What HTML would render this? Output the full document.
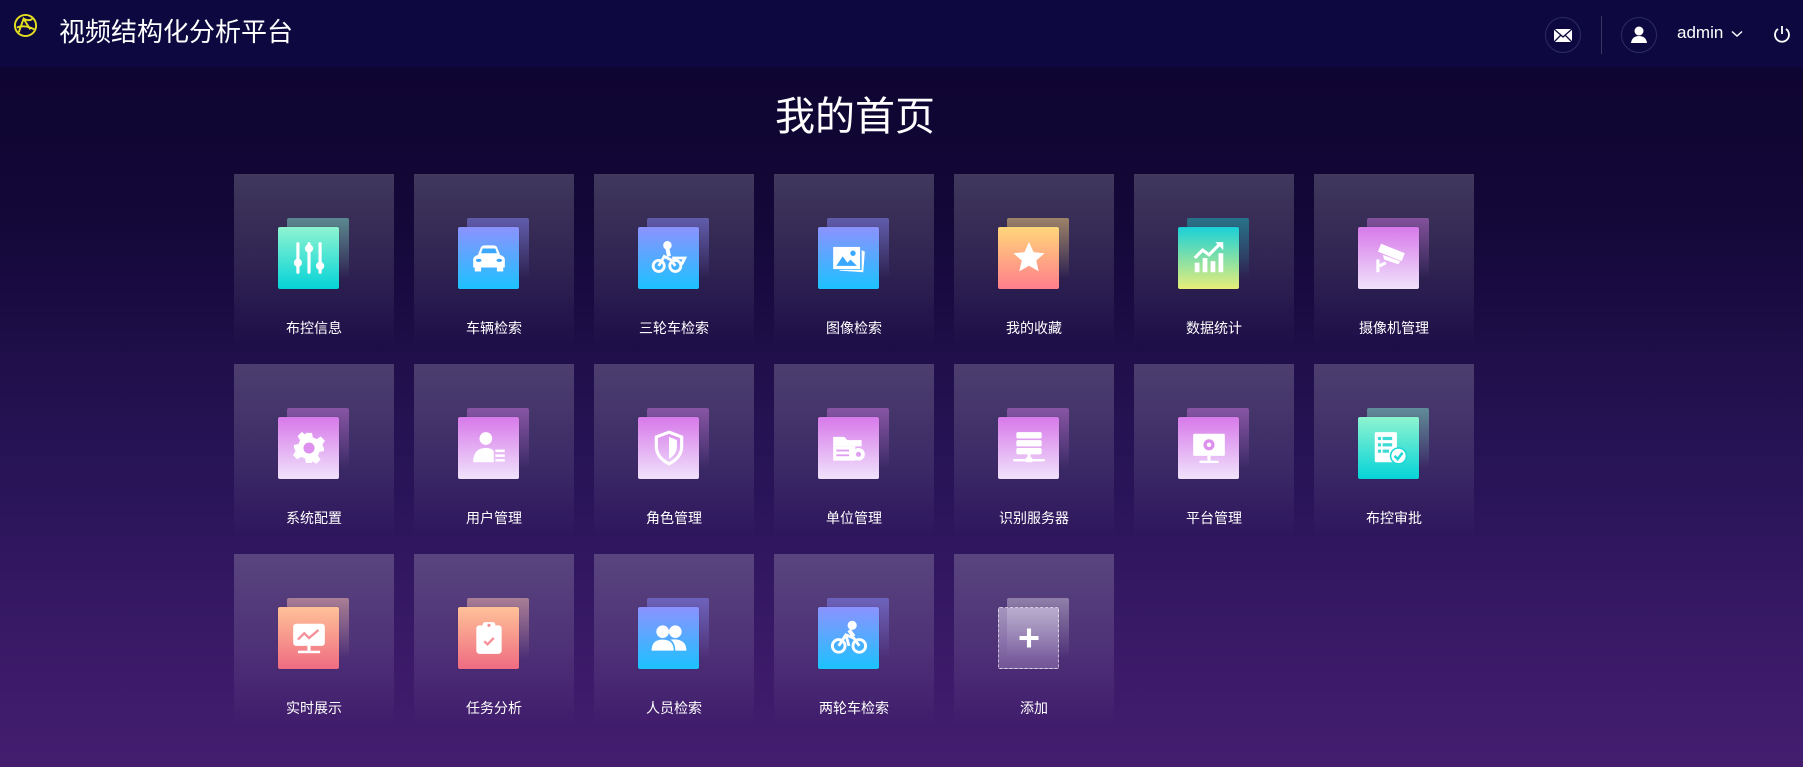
<!DOCTYPE html>
<html><head><meta charset="utf-8">
<style>
*{margin:0;padding:0;box-sizing:border-box}
body{width:1803px;height:767px;overflow:hidden;font-family:"Liberation Sans","Noto Sans CJK SC",sans-serif;color:#fff;
background:linear-gradient(180deg,#0f0532 67px,#120736 200px,#261355 450px,#3a1a68 650px,#441d6f 767px);position:relative}
.hdr{position:absolute;left:0;top:0;width:1803px;height:67px;background:#0d0940}
.title{position:absolute;left:59px;top:15px;font-size:26px;line-height:34px}
.h1{position:absolute;left:775px;top:92px;font-size:40px;line-height:50px;white-space:nowrap}
.tile{position:absolute;width:160px;height:172px;background:linear-gradient(180deg,rgba(255,255,255,.2),rgba(255,255,255,.1) 55%,rgba(255,255,255,0))}
.back{position:absolute;left:53px;top:44px;width:62px;height:60px;border-radius:2px}
.front{position:absolute;left:44px;top:53px;width:61px;height:62px;border-radius:2px;display:flex;align-items:center;justify-content:center;box-shadow:0 0 1px rgba(0,0,0,.3)}
.front svg{width:38px;height:38px}
.lbl{position:absolute;left:0;width:160px;top:144px;text-align:center;font-size:14px;line-height:20px}
.teal .front{background:linear-gradient(180deg,#8ef4d0,#05d3d8)}.teal .back{background:linear-gradient(180deg,rgba(120,210,190,.55),rgba(120,210,190,0))}
.blue .front{background:linear-gradient(180deg,#8c92ff,#1cc2ff)}.blue .back{background:linear-gradient(180deg,rgba(130,130,240,.55),rgba(130,130,240,0))}
.orng .front{background:linear-gradient(180deg,#ffd67a,#ff7e8c)}.orng .back{background:linear-gradient(180deg,rgba(240,200,120,.55),rgba(240,200,120,0))}
.ty .front{background:linear-gradient(180deg,#1ad0d8,#e8ee78)}.ty .back{background:linear-gradient(180deg,rgba(30,160,170,.6),rgba(30,160,170,0))}
.purp .front{background:linear-gradient(180deg,#d779ea,#f0e2fb)}.purp .back{background:linear-gradient(180deg,rgba(190,110,210,.55),rgba(190,110,210,0))}
.pink .front{background:linear-gradient(180deg,#ffc198,#ef6b82)}.pink .back{background:linear-gradient(180deg,rgba(240,180,170,.55),rgba(240,180,170,0))}
.add .front{background:linear-gradient(180deg,rgba(220,210,235,.6),rgba(190,160,220,.35));border:1.5px dashed rgba(255,255,255,.6)}.add .back{background:linear-gradient(180deg,rgba(255,255,255,.35),rgba(255,255,255,0))}
</style></head><body>
<div class="hdr">
<svg style="position:absolute;left:13px;top:13px" width="25" height="25" viewBox="0 0 26 26" fill="none" stroke="#e5e020" stroke-width="2"><circle cx="13" cy="13" r="11"/><path d="M6 20 L11 6 L18 17 M4 15 Q13 12 22 17 M11 6 Q17 9 20 6"/></svg>
<div class="title">视频结构化分析平台</div>
<svg style="position:absolute;left:1545px;top:17px" width="36" height="36" viewBox="0 0 36 36"><circle cx="18" cy="18" r="17.5" fill="none" stroke="#2e2a62"/><rect x="9" y="12" width="18" height="13" fill="#fff"/><path d="M9 12 L18 20 L27 12 M9 25 L15.5 18.5 M27 25 L20.5 18.5" stroke="#0d0940" stroke-width="1.3" fill="none"/></svg>
<div style="position:absolute;left:1601px;top:16px;width:1px;height:38px;background:#3a3660"></div>
<svg style="position:absolute;left:1621px;top:17px" width="36" height="36" viewBox="0 0 36 36"><circle cx="18" cy="18" r="17.5" fill="none" stroke="#2e2a62"/><circle cx="18" cy="14" r="4.5" fill="#fff"/><path d="M10 26 Q11 19 18 19 Q25 19 26 26Z" fill="#fff"/></svg>
<div style="position:absolute;left:1677px;top:22px;font-size:17px;line-height:22px">admin</div>
<svg style="position:absolute;left:1731px;top:30px" width="12" height="8" viewBox="0 0 12 8"><path d="M1 1.5 L6 6 L11 1.5" stroke="#fff" stroke-width="1.4" fill="none"/></svg>
<svg style="position:absolute;left:1773px;top:25px" width="18" height="18" viewBox="0 0 18 18" fill="none" stroke="#fff" stroke-width="1.8"><path d="M9 1 V9"/><path d="M5 4 A7 7 0 1 0 13 4"/></svg>
</div>
<div class="h1">我的首页</div>

<div class="tile teal" style="left:234px;top:174px"><div class="back"></div><div class="front"><svg viewBox="0 0 24 24" fill="#fff"><rect x="4" y="2" width="2" height="20" rx="1"/><rect x="11" y="2" width="2" height="20" rx="1"/><rect x="18" y="2" width="2" height="20" rx="1"/><circle cx="5" cy="15" r="2.6"/><circle cx="12" cy="6" r="2.6"/><circle cx="19" cy="17" r="2.6"/></svg></div><div class="lbl">布控信息</div></div>
<div class="tile blue" style="left:414px;top:174px"><div class="back"></div><div class="front"><svg viewBox="0 0 24 24" fill="#fff"><path d="M5 10 L7 5 Q8 4 9 4 H15 Q16 4 17 5 L19 10 Q22 11 22 13 V18 H2 V13 Q2 11 5 10Z"/><rect x="3" y="18" width="4" height="2.5"/><rect x="17" y="18" width="4" height="2.5"/><path d="M7 9 L8 6 H16 L17 9Z" fill="#3aa8ff"/><ellipse cx="5.5" cy="13.5" rx="1.8" ry="1" fill="#3aa8ff"/><ellipse cx="18.5" cy="13.5" rx="1.8" ry="1" fill="#3aa8ff"/></svg></div><div class="lbl">车辆检索</div></div>
<div class="tile blue" style="left:594px;top:174px"><div class="back"></div><div class="front"><svg viewBox="0 0 24 24" fill="none" stroke="#fff" stroke-width="1.8"><circle cx="5.5" cy="17" r="3.5"/><circle cx="16" cy="17" r="3.5"/><path d="M5.5 17 L9 11 L13 13 L16 17 M14 12 H22 L20 16"/><circle cx="11" cy="4" r="1.8" fill="#fff"/><path d="M11 6 L12 11" stroke-width="2.5"/></svg></div><div class="lbl">三轮车检索</div></div>
<div class="tile blue" style="left:774px;top:174px"><div class="back"></div><div class="front"><svg viewBox="0 0 24 24" fill="#fff"><rect x="2" y="5" width="17" height="14"/><path d="M20 7 L22 8 L21 21 L6 20 L6 19.5 L20 19.5Z"/><path d="M4 17 L8 11 L11 15 L13 13 L17 17Z" fill="#3aa8ff"/><circle cx="14.5" cy="9" r="1.7" fill="#3aa8ff"/></svg></div><div class="lbl">图像检索</div></div>
<div class="tile orng" style="left:954px;top:174px"><div class="back"></div><div class="front"><svg viewBox="0 0 24 24" fill="#fff"><path d="M12 2 L14.9 8.3 L21.8 9 L16.6 13.6 L18.1 20.4 L12 16.9 L5.9 20.4 L7.4 13.6 L2.2 9 L9.1 8.3Z"/></svg></div><div class="lbl">我的收藏</div></div>
<div class="tile ty" style="left:1134px;top:174px"><div class="back"></div><div class="front"><svg viewBox="0 0 24 24" fill="#fff"><rect x="3" y="15" width="3" height="6"/><rect x="8" y="12" width="3" height="9"/><rect x="13" y="14" width="3" height="7"/><rect x="18" y="9" width="3" height="12"/><path d="M3 12 L8 7 L12 10 L19 3" stroke="#fff" stroke-width="2" fill="none"/><path d="M16 2 H21 V7Z"/></svg></div><div class="lbl">数据统计</div></div>
<div class="tile purp" style="left:1314px;top:174px"><div class="back"></div><div class="front"><svg viewBox="0 0 24 24" fill="#fff"><path d="M7 3 L22 9 L20 14 L5 8Z"/><path d="M8 10 L19 14 L18 16 L9 13Z"/><rect x="4" y="13" width="2" height="8"/><path d="M6 17 L10 15" stroke="#fff" stroke-width="2"/></svg></div><div class="lbl">摄像机管理</div></div>

<div class="tile purp" style="left:234px;top:364px"><div class="back"></div><div class="front"><svg viewBox="0 0 24 24" fill="#fff"><path d="M10 2 H14 L14.6 5 L17.2 6.1 L19.8 4.4 L22.6 7.2 L20.9 9.8 L22 12.4 L22 14 L19 14.6 L18 17.2 L19.7 19.8 L16.9 22.6 L14.3 20.9 L13.7 22 H10 L9.4 19 L6.8 17.9 L4.2 19.6 L1.4 16.8 L3.1 14.2 L2 11.6 V10 L5 9.4 L6.1 6.8 L4.4 4.2 L7.2 1.4 L9.8 3.1Z" transform="scale(.95) translate(.6 .6)"/><circle cx="12" cy="12" r="3.5" fill="#dd90ee"/></svg></div><div class="lbl">系统配置</div></div>
<div class="tile purp" style="left:414px;top:364px"><div class="back"></div><div class="front"><svg viewBox="0 0 24 24" fill="#fff"><circle cx="10" cy="6" r="4"/><path d="M2 21 Q2 12 10 12 Q14 12 15 14 V21Z"/><rect x="16" y="13" width="6" height="1.6"/><rect x="16" y="16" width="6" height="1.6"/><rect x="16" y="19" width="6" height="1.6"/></svg></div><div class="lbl">用户管理</div></div>
<div class="tile purp" style="left:594px;top:364px"><div class="back"></div><div class="front"><svg viewBox="0 0 24 24"><path d="M12 2 L20 5 V11 Q20 18 12 22 Q4 18 4 11 V5Z" fill="none" stroke="#fff" stroke-width="2"/><path d="M12 5 L17 7 V11 Q17 16 12 19Z" fill="#fff"/></svg></div><div class="lbl">角色管理</div></div>
<div class="tile purp" style="left:774px;top:364px"><div class="back"></div><div class="front"><svg viewBox="0 0 24 24" fill="#fff"><path d="M2 5 H9 L11 7 H20 V11 H2Z"/><rect x="2" y="11" width="14" height="9"/><circle cx="18" cy="16" r="4"/><circle cx="18" cy="16" r="1.6" fill="#e0a0f0"/><rect x="4" y="13" width="8" height="1.2" fill="#e0a0f0"/><rect x="4" y="16" width="8" height="1.2" fill="#e0a0f0"/></svg></div><div class="lbl">单位管理</div></div>
<div class="tile purp" style="left:954px;top:364px"><div class="back"></div><div class="front"><svg viewBox="0 0 24 24" fill="#fff"><rect x="4" y="2" width="16" height="4" rx="1"/><rect x="4" y="7" width="16" height="4" rx="1"/><rect x="4" y="12" width="16" height="4" rx="1"/><rect x="11" y="16" width="2" height="4"/><rect x="2" y="19" width="20" height="1.5"/><rect x="10" y="18" width="4" height="3"/></svg></div><div class="lbl">识别服务器</div></div>
<div class="tile purp" style="left:1134px;top:364px"><div class="back"></div><div class="front"><svg viewBox="0 0 24 24" fill="#fff"><rect x="2" y="3" width="20" height="14" rx="1"/><rect x="11" y="17" width="2" height="3"/><rect x="6" y="20" width="12" height="1.5"/><circle cx="12" cy="10" r="3.5" fill="#dd90ee"/><circle cx="12" cy="10" r="1.4" fill="#fff"/></svg></div><div class="lbl">平台管理</div></div>
<div class="tile teal" style="left:1314px;top:364px"><div class="back"></div><div class="front"><svg viewBox="0 0 24 24" fill="#fff"><rect x="3" y="2" width="14" height="19" rx="1"/><circle cx="18" cy="17" r="5" fill="#fff" stroke="#1ed8d8" stroke-width="1"/><path d="M15.5 17 L17.5 19 L20.5 15" stroke="#1ed8d8" stroke-width="1.6" fill="none"/><g fill="#3ddad6"><rect x="5" y="5" width="2" height="2"/><rect x="8" y="5" width="6" height="2"/><rect x="5" y="9" width="2" height="2"/><rect x="8" y="9" width="6" height="2"/><rect x="5" y="13" width="2" height="2"/><rect x="8" y="13" width="4" height="2"/></g></svg></div><div class="lbl">布控审批</div></div>

<div class="tile pink" style="left:234px;top:554px"><div class="back"></div><div class="front"><svg viewBox="0 0 24 24" fill="#fff"><rect x="2" y="3" width="20" height="14" rx="2"/><rect x="11" y="17" width="2" height="3"/><rect x="5" y="20" width="14" height="1.6"/><path d="M5 13 L9 9 L12 12 L18 7" stroke="#f6909a" stroke-width="1.5" fill="none"/></svg></div><div class="lbl">实时展示</div></div>
<div class="tile pink" style="left:414px;top:554px"><div class="back"></div><div class="front"><svg viewBox="0 0 24 24" fill="#fff"><rect x="4" y="4" width="16" height="18" rx="2"/><rect x="8" y="2" width="8" height="4" rx="1.5"/><circle cx="12" cy="4" r="1" fill="#f6909a"/><path d="M9 14 L11 16 L15 12" stroke="#f6909a" stroke-width="1.5" fill="none"/></svg></div><div class="lbl">任务分析</div></div>
<div class="tile blue" style="left:594px;top:554px"><div class="back"></div><div class="front"><svg viewBox="0 0 24 24" fill="#fff"><circle cx="8" cy="8" r="4"/><circle cx="16" cy="8" r="4"/><path d="M1 20 Q1 13 8 13 Q15 13 15 20Z"/><path d="M13 13 Q23 12 23 20 H16 Q16 15 13 13Z"/></svg></div><div class="lbl">人员检索</div></div>
<div class="tile blue" style="left:774px;top:554px"><div class="back"></div><div class="front"><svg viewBox="0 0 24 24" fill="none" stroke="#fff" stroke-width="1.8"><circle cx="5.5" cy="17" r="4"/><circle cx="18.5" cy="17" r="4"/><path d="M5.5 17 L10 10 L15 12 L18.5 17 M10 10 L12 17"/><circle cx="14" cy="4" r="2" fill="#fff"/><path d="M12 7 L15 11" stroke-width="2.5"/></svg></div><div class="lbl">两轮车检索</div></div>
<div class="tile add" style="left:954px;top:554px"><div class="back"></div><div class="front"><svg viewBox="0 0 24 24"><path d="M12 6 V18 M6 12 H18" stroke="#fff" stroke-width="2.6"/></svg></div><div class="lbl">添加</div></div>
</body></html>
